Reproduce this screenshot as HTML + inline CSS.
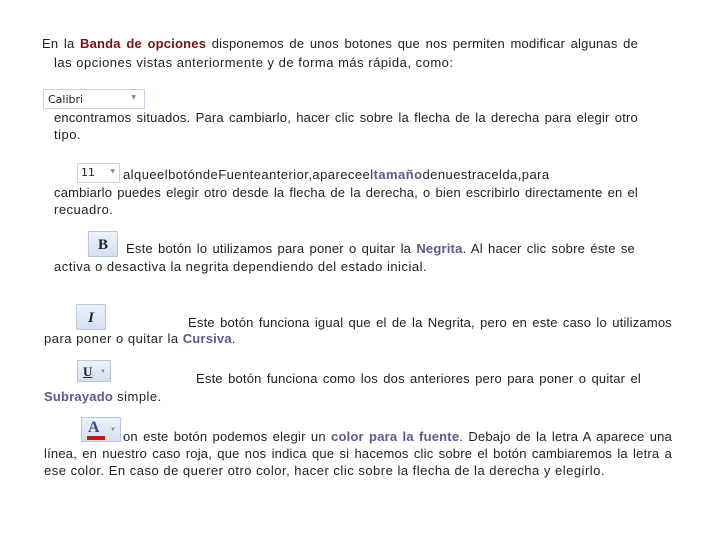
<html><head><style>
body{margin:0;width:720px;height:540px;background:#fff;position:relative;font-family:"Liberation Sans",sans-serif;font-size:13px;color:#222;letter-spacing:0.5px;}
.l{position:absolute;white-space:nowrap;line-height:16px;}
.j{text-align:justify;text-align-last:justify;letter-spacing:0.2px}
.r{color:#7a1010;font-weight:bold;letter-spacing:0.2px}
.b{color:#5a5a92;font-weight:bold;letter-spacing:0.2px}
.btn{position:absolute;background:linear-gradient(#eef3fa,#d3dff0);border:1px solid #b8c8de;box-sizing:border-box;letter-spacing:0}
</style></head><body>
<div class="l j" style="left:42px;top:36px;width:596px">En la <span class="r">Banda de opciones</span> disponemos de unos botones que nos permiten modificar algunas de</div>
<div class="l" style="left:54px;top:55px">las opciones vistas anteriormente y de forma más rápida, como:</div>

<div class="btn" style="left:43px;top:89px;width:102px;height:20px;background:#fff;border-color:#c5d3e6;font-family:'DejaVu Sans',sans-serif;font-size:11px;padding:3px 0 0 4px">Calibri<span style="position:absolute;right:8px;top:4px;font-size:6px;color:#889">▼</span></div>
<div class="l j" style="left:54px;top:110px;width:584px">encontramos situados. Para cambiarlo, hacer clic sobre la flecha de la derecha para elegir otro</div>
<div class="l" style="left:54px;top:127px">tipo.</div>

<div class="btn" style="left:77px;top:163px;width:43px;height:20px;background:#fff;border-color:#c5d3e6;font-family:'DejaVu Sans',sans-serif;font-size:11px;padding:2px 0 0 3px">11<span style="position:absolute;right:4px;top:4px;font-size:6px;color:#889">▼</span></div>
<div class="l" style="left:123px;top:167px;letter-spacing:0.45px">alqueelbotóndeFuenteanterior,apareceel<span class="b" style="letter-spacing:0.45px">tamaño</span>denuestracelda,para</div>
<div class="l j" style="left:54px;top:185px;width:584px">cambiarlo puedes elegir otro desde la flecha de la derecha, o bien escribirlo directamente en el</div>
<div class="l" style="left:54px;top:202px">recuadro.</div>

<div class="btn" style="left:88px;top:231px;width:30px;height:26px;font-family:'Liberation Serif',serif;font-weight:bold;font-size:15px;text-align:center;line-height:26px">B</div>
<div class="l j" style="left:126px;top:241px;width:509px">Este botón lo utilizamos para poner o quitar la <span class="b">Negrita</span>. Al hacer clic sobre éste se</div>
<div class="l" style="left:54px;top:259px">activa o desactiva la negrita dependiendo del estado inicial.</div>

<div class="btn" style="left:76px;top:304px;width:30px;height:26px;font-family:'Liberation Serif',serif;font-style:italic;font-weight:bold;font-size:15px;text-align:center;line-height:26px">I</div>
<div class="l j" style="left:188px;top:315px;width:484px">Este botón funciona igual que el de la Negrita, pero en este caso lo utilizamos</div>
<div class="l" style="left:44px;top:331px">para poner o quitar la <span class="b">Cursiva</span>.</div>

<div class="btn" style="left:77px;top:360px;width:34px;height:22px;font-family:'Liberation Serif',serif;font-weight:bold;font-size:13px;line-height:22px;padding-left:5px"><u>U</u><span style="position:absolute;right:4px;top:0;font-size:6px;color:#889">▼</span></div>
<div class="l j" style="left:196px;top:371px;width:445px">Este botón funciona como los dos anteriores pero para poner o quitar el</div>
<div class="l" style="left:44px;top:389px"><span class="b">Subrayado</span> simple.</div>

<div class="btn" style="left:81px;top:417px;width:40px;height:25px;font-family:'Liberation Serif',serif;font-weight:bold;font-size:16px;color:#334d8a;padding-left:6px;line-height:20px">A<span style="position:absolute;left:5px;top:18px;width:18px;height:4px;background:#d01010"></span><span style="position:absolute;right:4px;top:2px;font-size:6px;color:#889">▼</span></div>
<div class="l j" style="left:123px;top:429px;width:549px">on este botón podemos elegir un <span class="b">color para la fuente</span>. Debajo de la letra A aparece una</div>
<div class="l j" style="left:44px;top:446px;width:628px">línea, en nuestro caso roja, que nos indica que si hacemos clic sobre el botón cambiaremos la letra a</div>
<div class="l" style="left:44px;top:463px">ese color. En caso de querer otro color, hacer clic sobre la flecha de la derecha y elegirlo.</div>
</body></html>
